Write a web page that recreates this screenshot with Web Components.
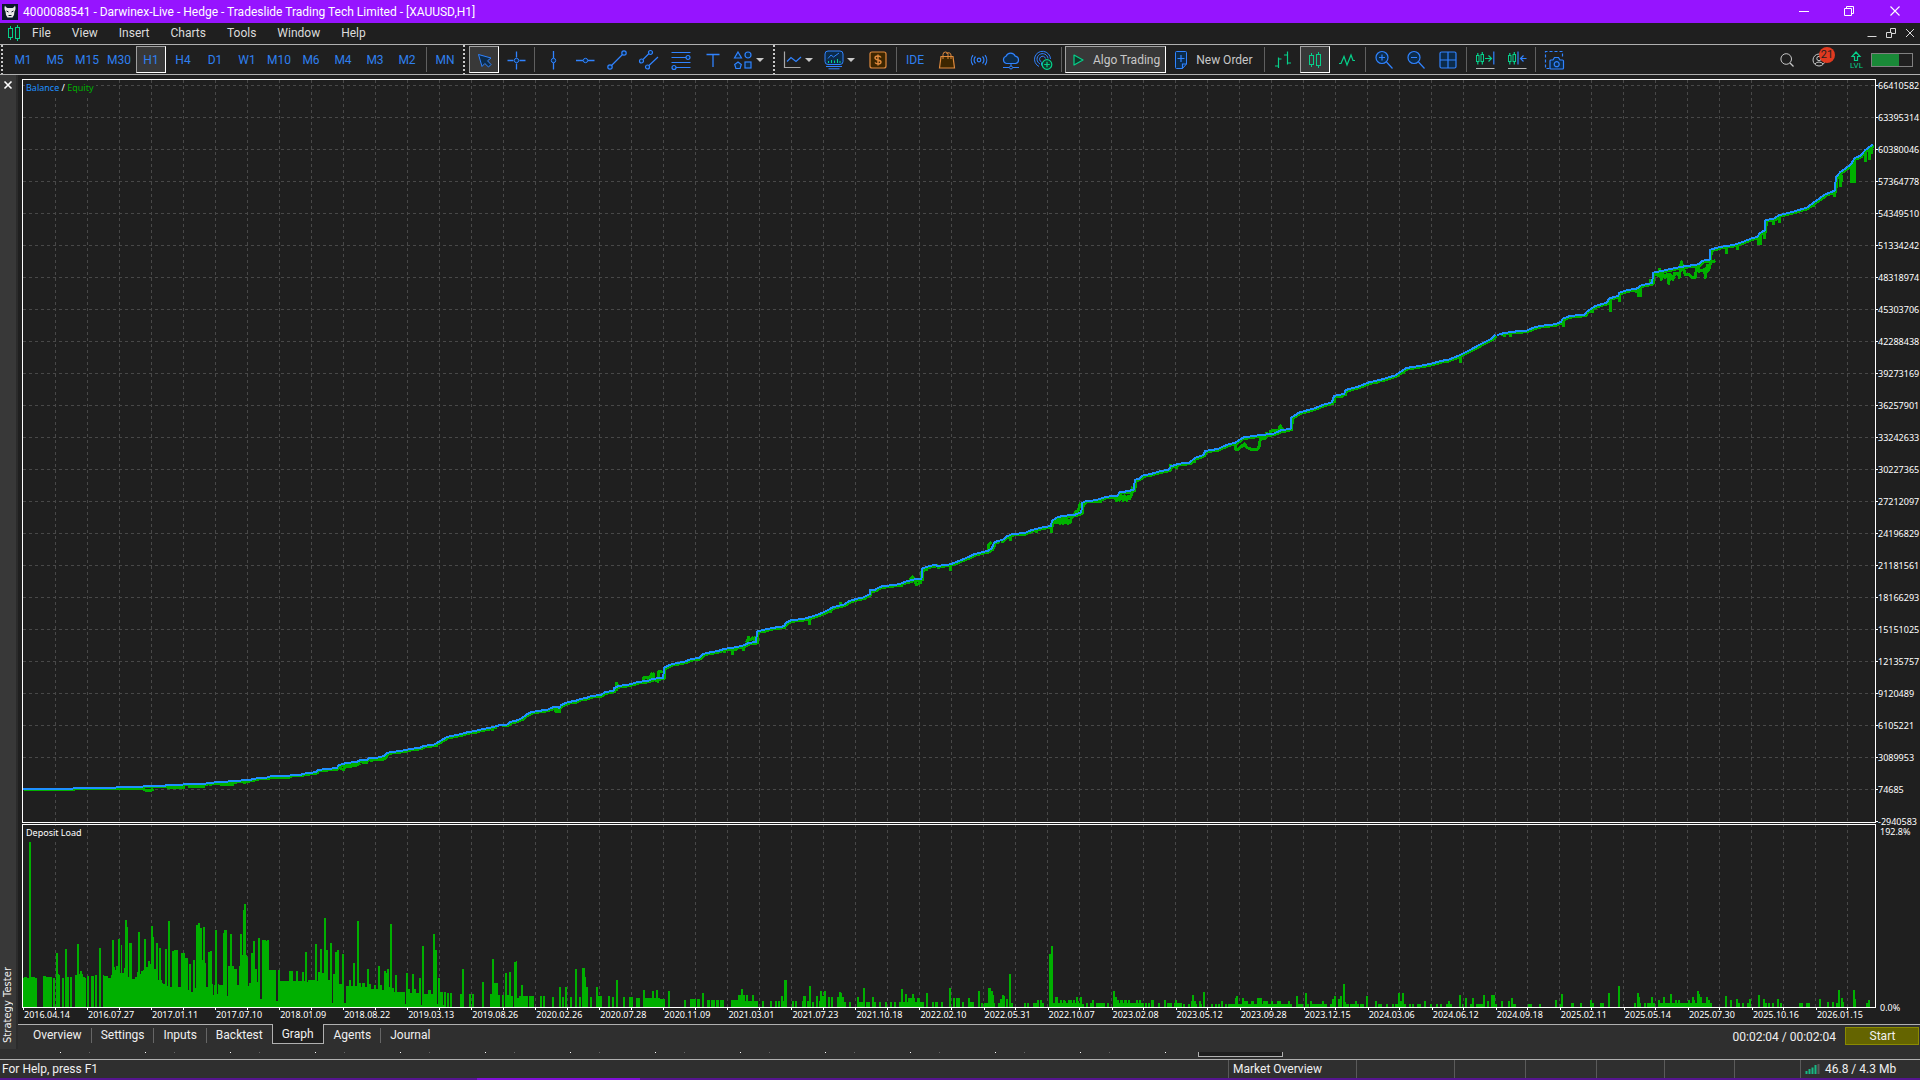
<!DOCTYPE html>
<html lang="en">
<head>
<meta charset="utf-8">
<title>Strategy Tester</title>
<style>
html,body{margin:0;height:100%}
body{background:#2f2f2f;color:#f0f0f0;font:12px/16px Roboto,"Noto Sans",sans-serif;overflow:hidden}
</style>
</head>
<body>
<trading-terminal></trading-terminal>
<script>
const BLUE='#3083ff',NAVY='#0c2b4a',GREEN='#06d08a',ORANGE='#e08a3c';
const define=(name,css,html,after)=>customElements.define(name,class extends HTMLElement{
  connectedCallback(){
    if(this.shadowRoot)return;
    const root=this.attachShadow({mode:'open'});
    const t=document.createElement('template');
    t.innerHTML=`<style>*{box-sizing:border-box}button{font:inherit;color:inherit;background:none;border:0;margin:0;padding:0}${css}</style>`+(typeof html==='function'?html(this):html);
    root.append(t.content.cloneNode(true));
    if(after)after(this,root);
  }
});

/* ---------- icons, drawn around 0,0 in a 24px box ---------- */
const s=(c,w=1)=>`fill="none" stroke="${c}" stroke-width="${w}"`;
const ICONS={
 candles:`<g ${s(GREEN)}><rect x="-5.500" y="-4.500" width="4" height="9"/><rect x="1.500" y="-5.500" width="4" height="11"/><path d="M-3.500-7v2.500M-3.500 4.500V7M3.500-8v2.500M3.500 5.500V8"/></g>`,
 cursor:`<path d="M-5.500-5.500L7-2 3.500.8 7 4.500 4.500 7 .8 3.500-2 6.500z" fill="${NAVY}" stroke="${BLUE}" stroke-linejoin="round"/>`,
 cross:`<g ${s(BLUE)}><path d="M-8.500.5h6M3.500.5h6M.5-8.500v6M.5 3.500v6" stroke-width="1.300"/><circle cx=".5" cy=".5" r="2.200" fill="${NAVY}"/></g>`,
 vline:`<g ${s(BLUE)}><path d="M.5-9V-2M.5 2.500V9.500" stroke-width="1.300"/><circle cx=".5" cy=".5" r="2.200" fill="${NAVY}"/></g>`,
 hline:`<g ${s(BLUE)}><path d="M-9 .5h7M2.500.5h7" stroke-width="1.300"/><circle cx=".5" cy=".5" r="2.200" fill="${NAVY}"/></g>`,
 trend:`<g ${s(BLUE,1.2)}><path d="M-5.500 5.500l11-11"/><circle cx="-7" cy="7" r="2.200" fill="${NAVY}"/><circle cx="7" cy="-7" r="2.200" fill="${NAVY}"/></g>`,
 channel:`<g ${s(BLUE,1.2)}><path d="M-6-.5L0-6.500M0 5.500L9-3"/><circle cx="-7.500" cy="1" r="2" fill="${NAVY}"/><circle cx="1.500" cy="-7.500" r="2" fill="${NAVY}"/><circle cx="-1.500" cy="7" r="2" fill="${NAVY}"/></g>`,
 fibo:`<g ${s(BLUE,1.2)}><path d="M-9.500-7.500h19M-9.500-2.500h14.500M-9.500 2.500h19M-5 7.500H9.500"/><circle cx="7" cy="-2.500" r="2" fill="${NAVY}"/><circle cx="-7" cy="7.500" r="2" fill="${NAVY}"/></g>`,
 text:`<path d="M-6.500-5.500h13M0-5.500V7" ${s(BLUE,1.300)}/>`,
 shapes:`<g stroke="${BLUE}" stroke-width="1.200" fill="${NAVY}"><path d="M-5-8l3.500 6h-7z"/><circle cx="5" cy="-5" r="3"/><path d="M-5 2l3.300 2.500-1.200 4h-4.200l-1.200-4z"/><rect x="2" y="2" width="6" height="6"/></g>`,
 linechart:`<path d="M-7.500-8.500V7.500H8.500" ${s('#a8a8a8',1.200)}/><path d="M-5 1.500l4-4 5 4L9-3" ${s(BLUE,1.300)}/>`,
 indicators:`<rect x="-9" y="-9" width="18" height="13.500" rx="3" fill="${NAVY}" stroke="${BLUE}"/><path d="M-6-1.500L-3-5-.5-3 5-7M-8 6.500H8M-5.500 8.800h11" ${s(BLUE)}/><path d="M-5.500 3v-2M-2.500 3v-3M.5 3V.5M3.500 3v-4M6 3v-2" ${s(GREEN)}/>`,
 dollar:`<rect x="-8" y="-8" width="16" height="16" rx="2" fill="#3d2600" stroke="${ORANGE}" stroke-width="1.200"/><path d="M3-2.500C2-4.500-3-4.500-3-2S3-.5 3 2-2 4.500-3 2.500M0-5.500v11" ${s(ORANGE,1.400)}/>`,
 bag:`<path d="M-6-3.500H6L7.500 8h-15z" fill="#3d2600" stroke="${ORANGE}" stroke-width="1.200"/><path d="M-4-1v-4.500a2.500 2.500 0 015 0V-1M-.5-6a2.400 2.400 0 014.500 1v4" ${s(ORANGE)}/>`,
 signal:`<g ${s(BLUE,1.2)}><circle r="1.800"/><path d="M-3.500-3.500a5 5 0 000 7M3.500-3.500a5 5 0 010 7M-6-5a8 8 0 000 10M6-5a8 8 0 010 10"/></g>`,
 cloud:`<path d="M-4.500 3.500a3.800 3.800 0 01-.5-7.300 5 5 0 019.300 0 3.700 3.700 0 01.2 7.300z" fill="${NAVY}" stroke="${BLUE}" stroke-width="1.200"/><path d="M0 3.500V6M-8 7.500h6M2 7.500h6" ${s(BLUE)}/><circle cy="7.500" r="1.500" ${s(BLUE)}/>`,
 radar:`<g ${s(BLUE)}><path d="M7.500-1A8 8 0 10-4 6.500"/><path d="M5-1.500A5.500 5.500 0 10-3 4M2.500-1.500A3 3 0 10-1.500 2M-1.500 2.500v3"/></g><circle cx="4" cy="4.500" r="4.800" fill="#0f3a2a" stroke="${GREEN}" stroke-width="1.200"/><path d="M1.200 4.500h5.600M4 1.700v5.600" ${s(GREEN,1.200)}/>`,
 play:`<path d="M-4-5L5 0l-9 5z" fill="#0f3a2a" stroke="${GREEN}" stroke-width="1.200" stroke-linejoin="round"/>`,
 neworder:`<path d="M-4.500-8.500h9a1 1 0 011 1V4L1.500 8.500h-6a1 1 0 01-1-1v-15a1 1 0 011-1z" fill="${NAVY}" stroke="${BLUE}"/><path d="M1.500 8.500V4h4M-3.500-1.500h7M0-5v7" ${s(BLUE,1.200)}/>`,
 bars:`<path d="M-4.500-2.500V8M-8 6h3.500M-4.500-1h3M4.500-8.500v13M1-5h3.500M4.500 3H8" ${s(GREEN,1.200)}/>`,
 zigzag:`<path d="M-8 3.500h2l3-7 3 8.500 4-10 2 5.500h2" ${s(GREEN,1.200)}/>`,
 zoomin:`<g ${s(BLUE,1.2)}><circle cx="-2" cy="-2.500" r="6" fill="${NAVY}"/><path d="M2.500 2l6 6.500M-5-2.500h6M-2-5.500v6"/></g>`,
 zoomout:`<g ${s(BLUE,1.2)}><circle cx="-2" cy="-2.500" r="6" fill="${NAVY}"/><path d="M2.500 2l6 6.500M-5-2.500h6"/></g>`,
 tiles:`<rect x="-8" y="-8" width="16" height="16" rx="1.500" fill="${NAVY}" stroke="${BLUE}" stroke-width="1.200"/><path d="M0-8V8M-8 0H8" ${s(BLUE,1.200)}/>`,
 autoscroll:`<g ${s(GREEN)}><rect x="-8.500" y="-4.500" width="2.500" height="6"/><rect x="-4" y="-5.500" width="2.500" height="7"/><path d="M-7.200-7v2.500M-7.200 1.500v3M-2.700-8v2.500M-2.700 1.500v3M0-1.500h6M3.500-4.500l3 3-3 3" stroke-width="1.200"/></g><path d="M8.800-8.500v13" ${s(BLUE,1.200)}/><path d="M-9 8.500H9.500" ${s('#b4b4b4')}/>`,
 shift:`<g ${s(GREEN)}><rect x="-8.500" y="-4.500" width="2.500" height="6"/><rect x="-4" y="-5.500" width="2.500" height="7"/><path d="M-7.200-7v2.500M-7.200 1.500v3M-2.700-8v2.500M-2.700 1.500v3" stroke-width="1.200"/></g><path d="M1-8.500v13M9.500-1.500H3.500M6.500-4.500l-3 3 3 3" ${s(BLUE,1.200)}/><path d="M-9 8.500H9.500" ${s('#b4b4b4')}/>`,
 camera:`<path d="M-4.500 8.500h-4v-17h17v6" ${s(BLUE,1.200)} stroke-dasharray="3 2"/><path d="M-3 0h2l1.500-2.500h4L6 0h2.500a1 1 0 011 1v7a1 1 0 01-1 1H-3a1 1 0 01-1-1V1a1 1 0 011-1z" fill="${NAVY}" stroke="${BLUE}" stroke-width="1.200"/><circle cx="2.700" cy="4.200" r="2.500" ${s(BLUE,1.200)}/>`,
 search:`<circle cx="-.8" cy="-1" r="5.300" ${s('#c8c8c8')}/><path d="M3 3l3.500 3.500" ${s('#c8c8c8',1.200)}/>`,
 user:`<g ${s('#c8c8c8')}><circle r="6"/><circle cy="-1.500" r="2.200"/><path d="M-4 4a5 5 0 018 0"/></g>`,
 level:`<path d="M0-5l4 4.500H1.500v4h-3v-4H-4z" ${s(GREEN,1.200)}/>`,
 bull:`<rect x="-8" y="-8" width="16" height="16" fill="#0a1828"/><path d="M-5-6.500C-6-4-5.500-2-4.500-.5L-4 3-2.500 5.500h5L4 3l.5-3.500C5.500-2 6-4 5-6.500 4-4.500 3-4 1.500-4h-3C-3-4-4-4.500-5-6.500z" fill="#e8e8e8"/><path d="M-3.500-1l2 1M3.500-1l-2 1M-1.500 3.500h3" ${s('#0a1828')}/>`,
 min:`<path d="M-5 .5H5" ${s('#fff')}/>`,
 restore:`<path d="M-4.500-2.500h7v7h-7zM-2.500-2.500v-2h7v7h-2" ${s('#fff')}/>`,
 close:`<path d="M-4.500-4.500l9 9M4.500-4.500l-9 9" ${s('#fff',1.100)}/>`,
 min2:`<path d="M-4.500 3.500h9" ${s('#d8d8d8',1)}/>`,
 restore2:`<path d="M-4.500-.5h5v5h-5zM-.5-.5v-4h5v5h-4" ${s('#d8d8d8')}/>`,
 close2:`<path d="M-4-4l8 8M4-4l-8 8" ${s('#d8d8d8')}/>`,
 closebold:`<path d="M-3.500-3.500l7 7M3.500-3.500l-7 7" ${s('#fff',1.600)}/>`,
 caret:`<path d="M-4-2h8L0 2z" fill="#c8c8c8"/>`,
 strength:`<path d="M-6.500 5V2M-3.500 5V0M-.5 5v-6.500M2.500 5v-9" ${s('#18b884',2)} /><path d="M5.500 5v-10" ${s('#5a5a5a',2)}/>`
};
define('line-icon',`:host{display:block;flex:none}svg{display:block}`,el=>{
  const w=+el.getAttribute('size')||24;
  return `<svg width="${w}" height="${w}" viewBox="${-w/2} ${-w/2} ${w} ${w}" aria-hidden="true">${ICONS[el.getAttribute('name')]}</svg>`;});

define('window-title',`:host{display:flex;align-items:center;height:23px;background:#9614ff;color:#fff;padding-left:2px}
 h1{font:inherit;margin:0 0 0 5px;flex:1;white-space:nowrap}
 button{width:46px;height:23px;padding-bottom:2px;display:grid;place-items:center}
 button:first-of-type{margin-right:-1px}button:last-of-type{margin-right:2px}`,
 `<line-icon name="bull" size="16"></line-icon><h1><slot></slot></h1>
 <button aria-label="Minimize"><line-icon name="min" size="16"></line-icon></button>
 <button aria-label="Restore"><line-icon name="restore" size="16"></line-icon></button>
 <button aria-label="Close"><line-icon name="close" size="16"></line-icon></button>`);

define('menu-bar',`:host{display:flex;align-items:center;height:21px;background:#1f1f1f;color:#dcdcdc;padding:0 1px 1px 6px}
 nav{display:flex;gap:21px;margin-left:10px;flex:1}
 .w{width:19px;height:18px;display:grid;place-items:center}`,
 `<line-icon name="candles" size="16"></line-icon><nav>${['File','View','Insert','Charts','Tools','Window','Help'].map(t=>`<button>${t}</button>`).join('')}</nav>
 ${[['min2','Minimize chart'],['restore2','Restore chart'],['close2','Close chart']].map(([i,l])=>`<button class="w" aria-label="${l}"><line-icon name="${i}" size="12"></line-icon></button>`).join('')}`);

define('tool-button',`:host{display:block;flex:none}
 button{height:27px;min-width:30px;border:1px solid transparent;display:flex;align-items:center;justify-content:center;white-space:nowrap}
 :host([wide]) button{padding:0 5px 0 0;gap:3px}
 :host([pressed]) button{background:#383838;border-color:#a0a0a0 #fff #fff #a0a0a0}`,
 el=>`<button aria-label="${el.getAttribute('label')||el.textContent.trim()}" aria-pressed="${el.hasAttribute('pressed')}"><slot></slot></button>`);
define('tool-grip',`:host{display:block;flex:none;width:2px;height:29px;margin:0 2px 0 1px;background:repeating-linear-gradient(#c8c8c8 0 2px,transparent 2px 4px)}`,'');
define('tool-rule',`:host{display:block;flex:none;width:1px;height:25px;background:#606060;margin:0 1px}`,'');

const tb=(i,l,x='')=>`<tool-button label="${l}" ${x}><line-icon name="${i}"></line-icon></tool-button>`;
const tf=t=>`<tool-button class="tf" ${t==='H1'?'pressed':''}>${t}</tool-button>`;
define('tool-bar',`:host{display:flex;align-items:center;height:31px;border:solid #b0b0b0;border-width:1px 0;background:#1f1f1f;gap:2px;padding-right:7px;color:#c8c8c8}
 .tf,.ide{color:#2f80f0}.grow{flex:1}.drop{display:flex;align-items:center;width:38px}.drop line-icon+line-icon{margin-left:-1px}
 .frames{display:flex;gap:2px;align-items:center;margin-left:1px}.frames tool-rule{margin:0 1px 0 2px}
 .order{margin-right:2px}
 .acct{position:relative;margin-right:7px}.badge{position:absolute;left:15px;top:1px;width:16px;height:16px;border-radius:8px;background:#e03a20;color:#1f1f1f;font-size:11px;line-height:16px;text-align:center}
 .lvl{display:flex;flex-direction:column;align-items:center;color:#06d08a;font-size:8px;line-height:6px;margin:0 6px 0 7px}
 .tests{display:block;width:42px;height:14px;border:1px solid #808080;background:linear-gradient(90deg,#1a8a38 27px,#1f1f1f 27px)}`,
 `<tool-grip></tool-grip><div class="frames">${['M1','M5','M15','M30','H1','H4','D1','W1','M10','M6','M4','M3','M2'].map(tf).join('')}<tool-rule></tool-rule>${tf('MN')}</div>
 <tool-grip></tool-grip>${tb('cursor','Cursor','pressed')}${tb('cross','Crosshair')}<tool-rule></tool-rule>
 ${tb('vline','Vertical line')}${tb('hline','Horizontal line')}${tb('trend','Trendline')}${tb('channel','Channel')}${tb('fibo','Fibonacci')}${tb('text','Text')}
 <tool-button label="Shapes"><span class="drop"><line-icon name="shapes"></line-icon><line-icon name="caret" size="12"></line-icon></span></tool-button>
 <tool-grip></tool-grip>
 <tool-button label="Chart type"><span class="drop"><line-icon name="linechart"></line-icon><line-icon name="caret" size="12"></line-icon></span></tool-button>
 <tool-button label="Indicators"><span class="drop"><line-icon name="indicators"></line-icon><line-icon name="caret" size="12"></line-icon></span></tool-button>
 ${tb('dollar','Symbols')}<tool-rule></tool-rule><tool-button class="ide">IDE</tool-button>
 ${tb('bag','Market')}${tb('signal','Signals')}${tb('cloud','Virtual hosting')}${tb('radar','Copy')}<tool-rule></tool-rule>
 <tool-button wide pressed><line-icon name="play"></line-icon>Algo Trading</tool-button>
 <tool-button wide class="order"><line-icon name="neworder"></line-icon>New Order</tool-button><tool-rule></tool-rule>
 ${tb('bars','Bars')}${tb('candles','Candlesticks','pressed')}${tb('zigzag','Line')}<tool-rule></tool-rule>
 ${tb('zoomin','Zoom in')}${tb('zoomout','Zoom out')}${tb('tiles','Tile windows')}<tool-rule></tool-rule>
 ${tb('autoscroll','Auto scroll')}${tb('shift','Chart shift')}<tool-rule></tool-rule>${tb('camera','Screenshot')}
 <span class="grow"></span>${tb('search','Search')}
 <span class="acct">${tb('user','Account')}<span class="badge">21</span></span>
 <span class="lvl"><line-icon name="level" size="12"></line-icon>LVL</span><span class="tests"></span>`);

/* ---------- series ----------
   Each block covers one stretch of the test: origin x, origin y, x units per px, points. */
const BALANCE=[
[0,700,2.904,'68,267 212,266 214,264 336,263 340,261 415,260 418,258 480,257 482,255 530,254 534,252 598,251 602,248 640,247 642,245 682,244 686,242 718,241 738,237 748,234 774,233 790,228 840,228 845,225 875,224 880,221 898,219 918,216 922,210 940,208 978,204 984,195 1000,191 1006,188 1034,187 1046,180 1066,179 1072,174 1096,173 1116,168 1124,159 1134,156 1154,154 1180,150 1190,147 1220,143 1230,138 1260,134 1280,122 1298,111 1340,102 1360,96 1380,93 1390,90 1420,84 1440,79'],
[500,540,2.904,'4,555 20,554 30,546 50,541 62,535 78,523 92,516 110,513 138,509 152,503 158,500 172,503 178,495 195,487 225,481 232,477 250,474 268,467 290,466 305,457 330,452 332,444 344,438 378,433 400,426 432,422 442,417 474,413 476,383 486,378 500,372 536,365 556,357 578,354 590,342 600,339 634,333 650,327 684,322 708,316 722,309 744,306 746,275 760,271 790,264 824,259 832,247 845,241 880,237 912,228 942,216 966,202 1000,193 1012,184 1034,177 1056,172 1074,162 1074,151 1090,149 1104,140 1158,133 1178,125 1205,118 1224,116 1226,86 1244,79 1266,74 1270,78 1290,75 1308,73 1330,64 1358,52 1378,42 1416,33 1428,25 1436,6 1448,2'],
[1000,360,2.904,'0,541 10,538 18,530 36,522 72,519 90,511 120,503 148,498 151,482 165,473 180,468 218,464 236,457 239,429 250,423 276,421 296,415 308,410 340,408 348,396 370,394 388,389 392,359 404,356 416,346 438,342 460,335 490,329 496,319 520,311 550,308 566,294 590,285 596,273 632,267 660,254 684,248 704,233 750,226 795,221 816,211 844,206 846,173 870,157 910,146 940,134 964,127 970,108 1000,101 1004,90 1040,80 1072,67 1110,58 1148,46 1180,24 1230,16 1260,9 1284,2 1300,0 1330,-12 1365,-30 1402,-51 1426,-63 1438,-75'],
[1500,130,3,'0,612 20,608 40,605 80,602 100,593 120,588 165,583 184,575 188,566 210,558 254,554 260,545 286,528 320,518 328,505 354,498 358,488 380,481 412,475 420,467 456,459 460,428 484,423 540,411 596,403 608,392 629,390 631,359 660,351 700,345 720,339 755,325 772,321 778,310 794,301 796,271 824,265 836,256 880,245 920,233 940,218 976,193 1004,182 1008,141 1020,127 1052,104 1064,84 1080,78 1096,60 1118,44']];
const SWINGS=[
[0,700,2.904,'M340,266h75l5,4h20l6,-3M486,262h50M545,259h50M610,256v3M640,253h40M710,246v5M916,218v5M984,200l6,6 8,2 6,-8 28,-3 14,-8M1050,188h18M1074,181l42,-4 8,-8M1268,136v4M1380,97v4M1430,88v5M1470,78v3M1516,58v5'],
[500,540,2.904,'M122,513v7M160,505v8h16M218,485v8M338,452V430l4,8M414,432l4,-20h10l6,8 6,-18 4,12 2,-12v14l12,8 2,-28 12,-2M652,330v10M674,328v16M684,325v8M706,318v16M716,308l6,-16 4,8 8,-6 6,8 4,-14M768,272v8M826,262v6M900,232v22M928,224v8M960,208v10M990,196v-10M1048,176v6M1068,168v6M1086,152v8M1110,142v6M1166,132v8M1186,130l8,-16 4,-4 6,12 6,12 12,-6 2,-34M1240,84v10M1272,80v8M1300,76v6M1307,76v18M1390,38v6M1418,34l2,-20 8,-8'],
[1000,360,2.904,'M8,546v4M30,530v12M106,510v10M150,500v18M156,488h10l6,-10 2,12 4,-14 4,14 4,-16 4,14 4,-12 4,14 6,-4 4,-16 6,-2 6,-14h6l4,-12 4,-14M276,425h20M334,412l4,10 6,-10 4,8 6,-12 4,14 4,-14 6,14 4,-14 4,8 6,-14 4,-22M480,334v4M494,334V313M514,318v8M566,298v10M684,250v18l6,2 8,-8 12,-10 6,10 14,6h18l6,-12 2,-22h16l2,-14 8,4 4,-10 6,-4h14l2,4 6,-16 6,10 8,6 8,-4M900,150v6M970,120v8M992,108v6M1092,66v6M1128,56v4M1172,32v10M1310,0v4M1338,-12v20'],
[1500,130,3,'M12,612v8M30,610v12M190,570v20M210,562v4M276,540v10M331,510v36M357,500v16M410,480v8M416,475v25M422,472v30M440,466v6M450,460v-14M460,432l16,4 2,-18 6,30 4,-18 6,12 10,-10 2,28 4,-26 8,14 6,-18h12l2,12 6,-46 6,20 6,18 8,-2 14,12 8,-2 4,-30 4,-8 2,20 8,-2 10,-4 2,24 6,-36 4,14 6,-22 14,-6M678,354v18M711,345v16M774,320v20h8V316M792,304v22M820,272v14M838,262v16M940,222v10M970,200v6M1004,184v18M1020,132v38M1025,135v20M1054,108v50M1060,96v62M1064,90v68M1095,66v30M1108,54v36M1113,52v20']];
/* deposit load: x0,x1,top of each bar */
const LOAD=[
[0,'56,60,474 60,67,471 67,71,474 71,76,66 76,86,471 86,91,474 105,112,468 112,127,471 130,135,474 137,142,400 142,145,462 145,148,466 152,157,474 159,164,388 165,169,471 171,176,471 184,188,465 189,194,373 194,197,462 197,201,453 201,204,462 204,208,471 208,211,474 213,218,468 223,230,468 233,238,465 243,247,385 252,255,465 255,265,468 265,271,475 271,274,465 274,279,361 279,282,441 282,285,450 285,289,438 289,294,358 294,296,459 296,300,376 300,304,460 304,306,445 306,311,300 311,314,321 314,317,471 317,323,370 323,331,477 331,335,471 335,338,456 338,343,336 343,346,462 346,350,453 350,353,450 353,358,358 358,362,441 362,367,423 367,370,432 370,375,318 375,377,351 377,382,448 382,387,370 387,389,480 389,394,384 394,397,480 397,400,490 400,404,493 404,409,388 409,412,498 412,416,303 416,421,501 421,426,393 426,436,390 436,443,501 443,453,400 453,461,415 461,463,510 463,468,432 468,473,516 473,478,420 478,480,504 480,485,315 485,490,309 490,495,324 495,497,420 497,502,321 502,505,430 505,510,501 510,514,396 514,519,393 519,522,492 522,525,525 525,527,495 527,532,330 532,534,522 534,537,492 537,546,495 546,550,339 550,556,330 556,559,528 559,563,438 563,568,343 568,574,438 574,581,447 581,586,495 586,588,438 588,593,343 593,596,405 596,598,270 598,603,252 603,605,405 605,608,411 608,611,498 611,616,490 616,620,400 620,625,364 625,630,447 630,632,486 632,637,354 637,642,537 642,651,361 651,655,363 655,659,360 659,675,450 675,681,543 681,686,450 686,708,484 708,718,453 718,725,484 725,730,453 730,740,484 740,745,456 745,747,484 747,752,396 752,755,486 755,772,481 772,777,373 777,780,484 780,784,456 784,789,388 789,794,460 794,799,294 799,804,390 804,808,480 808,813,369 813,816,549 816,821,462 821,826,396 826,831,390 831,838,492 838,843,402 843,848,549 848,855,498 855,860,480 860,865,498 865,870,430 870,875,498 875,880,303 880,885,490 885,888,501 888,894,489 894,899,501 899,904,447 904,909,492 909,917,507 917,921,495 921,926,507 926,931,438 931,936,495 936,941,510 941,946,453 946,948,460 948,953,447 953,955,501 955,960,312 960,965,504 965,968,516 968,973,466 973,992,516 992,995,552 995,1000,460 1000,1004,507 1004,1009,520 1009,1014,462 1014,1019,507 1019,1027,519 1027,1031,474 1031,1034,555 1034,1039,378 1039,1049,522 1049,1056,511 1056,1061,522 1061,1066,343 1066,1071,390 1071,1073,552 1073,1078,474 1078,1086,516 1086,1088,555 1088,1093,516 1095,1100,519 1102,1107,519 1127,1132,522 1132,1137,447 1149,1154,522 1156,1161,522 1181,1186,486 1200,1205,522 1205,1210,417 1210,1220,489 1220,1225,525 1230,1235,525 1237,1242,460 1242,1247,525 1247,1252,456 1252,1257,528 1259,1263,426 1263,1267,423 1267,1271,534 1271,1276,528 1276,1281,495 1281,1293,528 1296,1308,528 1323,1328,528 1330,1335,528 1352,1357,531 1370,1374,501 1377,1382,531 1384,1389,501 1396,1401,531 1409,1414,447 1419,1424,531 1426,1433,444 1433,1435,471 1435,1441,501 1445,1450,531 1460,1465,501 1465,1475,528 1490,1494,528 1499,1504,531 1509,1514,480 1526,1531,531 1541,1551,531 1558,1568,534'],
[640,'7,12,510 12,29,534 29,34,513 34,39,534 39,44,510 44,48,534 48,61,537 69,73,513 108,113,540 122,137,537 140,147,537 152,157,519 164,171,540 174,184,540 186,194,540 196,206,540 223,240,540 240,247,525 247,252,507 252,257,525 257,260,543 260,265,525 265,274,543 274,279,525 279,289,543 299,304,543 318,323,543 331,336,543 338,343,543 345,350,528 350,353,543 353,360,480 372,377,543 380,385,543 397,399,543 399,407,528 409,414,543 414,419,498 421,426,546 431,436,528 438,441,543 441,446,513 446,451,528 451,456,513 461,466,531 468,473,531 483,487,531 487,492,516 492,495,519 495,500,531 500,505,546 512,517,546 532,537,531 537,546,546 546,551,504 554,563,546 568,573,531 573,578,546 586,590,546 600,605,546 612,617,546 622,627,546 635,639,546 639,644,507 644,649,546 649,654,522 654,657,546 657,666,534 666,671,522 671,674,534 674,679,546 679,686,534 686,696,546 701,706,519 715,720,546 723,730,546 737,742,546 757,762,504 767,772,534 774,784,534 789,794,546 804,808,534 808,818,546 828,833,513 835,840,549 843,853,549 853,860,504 860,865,513 865,867,525 867,870,549 877,881,549 881,887,537 887,892,525 892,895,528 897,902,537 904,909,462 909,914,549 941,946,549 948,953,549 963,973,549 973,978,540 980,985,540 985,990,549 1002,1007,402 1007,1012,378 1012,1017,549 1017,1024,531 1024,1029,549 1029,1034,540 1034,1036,549 1036,1041,540 1041,1044,543 1044,1049,549 1049,1058,540 1058,1061,549 1061,1066,540 1066,1068,549 1068,1073,531 1073,1076,543 1076,1078,549 1078,1083,531 1083,1088,552 1093,1098,549 1102,1107,549 1107,1112,540 1117,1139,549 1144,1149,549 1159,1164,513 1164,1169,531 1169,1173,540 1173,1176,549 1176,1183,540 1183,1186,549 1186,1193,540 1193,1195,549 1195,1200,540 1200,1215,549 1215,1220,540 1220,1223,549 1223,1227,540 1227,1235,549 1237,1242,549 1245,1250,549 1252,1259,540 1269,1274,549 1284,1289,540 1291,1303,549 1308,1311,549 1311,1316,540 1316,1328,550 1330,1335,552 1343,1348,552 1350,1352,543 1352,1357,525 1357,1362,543 1362,1364,552 1370,1374,543 1374,1377,552 1379,1384,516 1399,1404,552 1409,1414,552 1416,1421,552 1423,1428,543 1433,1438,552 1441,1458,552 1458,1460,534 1460,1465,528 1465,1475,552 1475,1480,534 1480,1490,543 1490,1497,552 1497,1504,543 1504,1512,552 1512,1524,534 1524,1526,552 1526,1539,543 1539,1546,552 1546,1551,543 1551,1561,552 1561,1568,543'],
[1280,'0,2,543 2,20,552 20,24,543 24,29,552 39,44,528 44,56,552 61,66,519 66,71,552 73,78,543 78,103,552 103,108,543 108,115,552 122,127,552 127,132,537 132,137,528 142,147,537 147,152,528 154,159,492 159,162,546 162,169,552 171,184,552 184,189,543 189,194,552 196,206,552 211,216,528 233,238,543 240,250,552 260,265,552 274,279,552 281,289,552 289,294,519 294,299,543 299,304,519 304,309,552 316,321,552 323,328,552 336,345,552 353,358,543 367,372,552 382,387,552 392,397,552 407,412,552 412,416,543 416,421,552 438,443,525 446,448,552 453,458,534 465,470,552 470,475,534 480,497,552 497,502,525 507,512,543 517,527,525 527,532,552 541,546,543 559,564,543 566,571,534 571,578,552 608,617,552 635,640,552 674,679,540 686,688,552 688,693,522 713,720,549 735,740,549 759,764,540 764,769,549 784,794,549 804,809,519 828,833,498 867,872,549 875,880,519 880,882,531 882,885,549 892,897,549 899,909,549 909,914,531 914,919,549 926,931,540 931,938,549 938,943,531 943,955,549 955,960,522 960,967,549 967,972,540 972,975,549 975,980,540 980,1000,549 1000,1004,540 1004,1009,549 1009,1014,531 1014,1017,540 1017,1022,549 1022,1027,513 1027,1029,522 1029,1034,531 1034,1044,549 1044,1049,531 1049,1053,540 1053,1058,549 1090,1095,528 1102,1107,540 1117,1122,537 1122,1127,549 1132,1137,549 1144,1149,549 1149,1154,537 1171,1176,525 1183,1188,537 1188,1193,549 1195,1200,549 1205,1210,549 1218,1223,537 1225,1230,549 1272,1281,549 1289,1299,549 1321,1326,537 1340,1345,546 1352,1357,546 1362,1367,549 1367,1372,510 1374,1380,534 1380,1382,546 1404,1409,510 1409,1411,537 1436,1441,549 1441,1446,540']];
const range=(a,b,st)=>{const r=[];for(let v=a;v<=b;v+=st)r.push(v);return r};
const VGRID=range(55,1847,32);
const place=([ox,oy,u],dx=0,dy=0)=>`transform="translate(${ox+dx} ${oy+dy}) scale(${1/u} ${1/3})"`;

define('balance-graph',`:host{display:block;position:relative;min-height:0;border:1px solid #fff;background:#1f1f1f}
 svg{display:block;width:100%;height:100%;position:absolute;inset:0}
 p{position:absolute;left:2px;top:1px;margin:0;background:#1f1f1f;font:9px/14px "Noto Sans",sans-serif;color:#fff;padding:0 2px 0 1px}
 .b{color:#1e90ff}.e{color:#00b000}`,
 ()=>`<svg viewBox="23 80 1852 742" preserveAspectRatio="none" role="img" aria-label="Balance and equity">
 <g stroke="#484848" stroke-dasharray="3 3" shape-rendering="crispEdges" fill="none">
 <path d="${VGRID.map(x=>`M${x}.5 80V822`).join('')}"/><path d="${range(85,805,32).map(y=>`M23 ${y}.5H1875`).join('')}"/></g>
 <g fill="none" stroke-width="2" shape-rendering="crispEdges" stroke-linejoin="round">
 <g stroke="#00b000" stroke-width="3">${BALANCE.map(b=>`<polyline ${place(b,1,1)} vector-effect="non-scaling-stroke" points="${b[3]}"/>`).join('')}
 ${SWINGS.map(b=>`<path ${place(b)} vector-effect="non-scaling-stroke" d="${b[3]}"/>`).join('')}</g>
 <g stroke="#1e90ff">${BALANCE.map(b=>`<polyline ${place(b)} vector-effect="non-scaling-stroke" points="${b[3]}"/>`).join('')}<path d="M495 726l7-1M996 542l5-2M1497 335l4-1"/></g></g></svg>
 <p><span class="b">Balance</span> / <span class="e">Equity</span></p>`);

define('deposit-graph',`:host{display:block;position:relative;min-height:0;border:1px solid #fff;background:#1f1f1f}
 svg{display:block;width:100%;height:100%;position:absolute;inset:0}
 p{position:absolute;left:2px;top:1px;margin:0;background:#1f1f1f;font:9px/14px "Noto Sans",sans-serif;color:#fff;padding:0 1px}`,
 ()=>`<svg viewBox="23 825 1852 182" preserveAspectRatio="none" role="img" aria-label="Deposit load by date">
 <path stroke="#484848" stroke-dasharray="3 3" stroke-dashoffset="1" shape-rendering="crispEdges" d="${VGRID.map(x=>`M${x}.5 825V1007`).join('')}"/>
 <path fill="#00b000" shape-rendering="crispEdges" d="${LOAD.map(([o,d])=>d.split(' ').map(q=>{const [a,b,t]=q.split(',').map(Number);const x=Math.round(o+a/2.45),e=Math.round(o+b/2.45),y=Math.round(820+t/3);return `M${x} ${y}H${e}V1007H${x}z`}).join('')).join('')}"/></svg><p>Deposit Load</p>`);

const YS=[66410582,63395314,60380046,57364778,54349510,51334242,48318974,45303706,42288438,39273169,36257901,33242633,30227365,27212097,24196829,21181561,18166293,15151025,12135757,9120489,6105221,3089953,74685,-2940583];
const XS='2016.04.14 2016.07.27 2017.01.11 2017.07.10 2018.01.09 2018.08.22 2019.03.13 2019.08.26 2020.02.26 2020.07.28 2020.11.09 2021.03.01 2021.07.23 2021.10.18 2022.02.10 2022.05.31 2022.10.07 2023.02.08 2023.05.12 2023.09.28 2023.12.15 2024.03.06 2024.06.12 2024.09.18 2025.02.11 2025.05.14 2025.07.30 2025.10.16 2026.01.15'.split(' ');
define('tester-graph',`:host{display:grid;grid-template-columns:minmax(0,1fr) 44px;grid-template-rows:minmax(0,744fr) minmax(0,184fr) 15px;row-gap:1px;padding:4px 0 0 4px;background:#1f1f1f;min-height:0;font:9px/8px "Noto Sans",sans-serif;color:#fff}
 .y{display:flex;flex-direction:column;justify-content:space-between;padding:7px 0 1px}
 .y span{height:0;display:flex;align-items:center;white-space:nowrap}.y span:before{content:"";width:2px;height:1px;background:#fff;margin:0 0 2px 0}
 .p{display:flex;flex-direction:column;justify-content:space-between;padding:0 0 0 4px;margin:4px 0 -4px}
 .x{grid-column:1/-1;display:grid;grid-template-columns:repeat(29,1fr);margin:-1px 40px 0 1px}
 .x span{white-space:nowrap;padding:1px 0 0 1px;line-height:12px;background:linear-gradient(#fff,#fff) 0 0/1px 2px no-repeat,linear-gradient(#fff,#fff) 50% 0/1px 2px no-repeat}`,
 `<balance-graph></balance-graph><div class="y">${YS.map(v=>`<span>${v}</span>`).join('')}</div>
 <deposit-graph></deposit-graph><div class="p"><span>192.8%</span><span>0.0%</span></div>
 <div class="x">${XS.map(v=>`<span>${v}</span>`).join('')}</div>`);

define('tester-side',`:host{display:flex;flex-direction:column;justify-content:space-between;align-items:center;width:18px;background:#383838;border-right:2px solid #2b2b2b;padding:2px 0 6px;height:100%}
 button{width:16px;height:16px;display:grid;place-items:center}
 span{writing-mode:vertical-rl;transform:rotate(180deg);font:10px/16px "DejaVu Sans",sans-serif;white-space:nowrap}`,
 `<button aria-label="Close tester"><line-icon name="closebold" size="12"></line-icon></button><span>Strategy Tester</span>`);

define('tester-tabs',`:host{display:flex;height:25px;border-top:1px solid #b0b0b0;padding:0 1px 0 5px;background:#2f2f2f}
 button{height:19px;padding:0 9px 0 10px;position:relative}
 button+button:before{content:"";position:absolute;left:0;top:3px;height:15px;width:1px;background:#666}
 .on{height:20px;margin-top:-1px;background:#1f1f1f;border:1px solid #b0b0b0;border-top:0;padding:0 9px}.on:before,.on+button:before{display:none!important}
 time{margin-left:auto;margin-right:9px;padding-top:4px}
 .start{width:74px;height:18px;margin-top:2px;background:#646400;border:1px solid #8a8a00}
 time+.start:before{display:none}`,
 `${['Overview','Settings','Inputs','Backtest','Graph','Agents','Journal'].map(t=>`<button class="${t==='Graph'?'on':''}">${t}</button>`).join('')}<time>00:02:04 / 00:02:04</time><button class="start">Start</button>`);

define('chart-strip',`:host{display:flex;height:10px;padding:3px 0 0 60px;background:#2f2f2f}
 i{display:block;height:1px;width:85px;flex:none;background:linear-gradient(90deg,#fff 1px,transparent 1px 29px,#666 29px 30px,transparent 30px)}
 b{display:block;width:85px;height:5px;margin-left:32px;background:#1f1f1f;border:1px solid #b0b0b0;border-top:0}i.l{width:1px}`,
 `${'<i></i>'.repeat(13)}<i class="l"></i><b></b>`);

define('status-bar',`:host{display:grid;grid-template-columns:minmax(0,1fr) 128px 98px 71px 71px 68px 70px 66px 120px;height:21px;border-top:1px solid #b0b0b0;background:linear-gradient(90deg,#55158f 477px,#8010d8 477px 640px,#55158f 640px) bottom/100% 2px no-repeat #2f2f2f}
 span{display:flex;align-items:center;gap:4px;height:18px;padding-left:4px;border-left:1px solid #5a5a5a;white-space:nowrap}span:first-of-type{border:0;padding-left:2px}`,
 `<span>For Help, press F1</span><span>Market Overview</span>${'<span></span>'.repeat(6)}<span><line-icon name="strength" size="16"></line-icon>46.8 / 4.3 Mb</span>`);

define('trading-terminal',`:host{display:flex;flex-direction:column;height:100vh}
 main{flex:1;min-height:0;display:grid;grid-template-columns:18px minmax(0,1fr)}
 section{display:flex;flex-direction:column;min-height:0}tester-graph{flex:1}`,
 `<window-title>4000088541 - Darwinex-Live - Hedge - Tradeslide Trading Tech Limited - [XAUUSD,H1]</window-title>
 <menu-bar></menu-bar><tool-bar></tool-bar>
 <main><tester-side></tester-side><section><tester-graph></tester-graph><tester-tabs></tester-tabs></section></main>
 <chart-strip></chart-strip><status-bar></status-bar>`);
</script>
</body>
</html>
